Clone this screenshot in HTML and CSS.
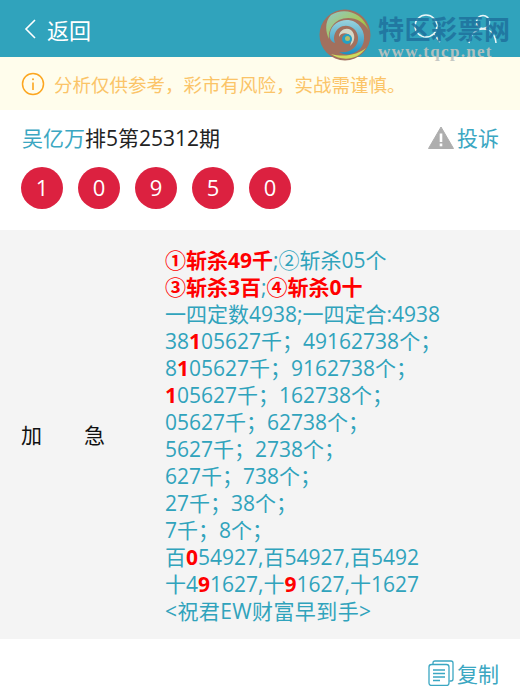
FILE: index.html
```html
<!DOCTYPE html>
<html lang="zh-CN">
<head>
    <meta charset="UTF-8">
    <meta name="viewport" content="width=device-width, initial-scale=1.0">
    <title>吴亿万排5第25312期</title>
    <link rel="stylesheet" href="styles.css">
</head>

<body>
    <header class="topbar">
        <div class="back">
            <svg class="back-icon" width="14" height="22" viewBox="0 0 14 22"><path d="M12 2 L3 11 L12 20" fill="none" stroke="#fff" stroke-width="1.6"/></svg>
            <span>返回</span>
        </div>
        <div class="top-icons">
            <svg width="28" height="30" viewBox="0 0 28 30"><circle cx="12" cy="12" r="11" fill="none" stroke="#fff" stroke-width="1.5"/><path d="M20 20 L26 28" stroke="#fff" stroke-width="1.5"/></svg>
            <svg width="32" height="30" viewBox="0 0 32 30"><circle cx="17" cy="8" r="6.500" fill="none" stroke="#fff" stroke-width="1.5"/><path d="M3 29 C5 20 10 15 17 15 C24 15 29 20 30 29" fill="none" stroke="#fff" stroke-width="1.5"/></svg>
        </div>
        <!-- watermark lying over the bar -->
        <div class="watermark">
            <svg class="wm-logo" width="52" height="52" viewBox="0 0 52 52">
                <defs>
                    <linearGradient id="wmTop" x1="0" y1="0" x2="1" y2="1"><stop offset="0" stop-color="#8fc9cf"/><stop offset="0.6" stop-color="#a9c84e"/><stop offset="1" stop-color="#6f9f55"/></linearGradient>
                    <linearGradient id="wmBlue" x1="0" y1="0" x2="0" y2="1"><stop offset="0" stop-color="#9ad2dd"/><stop offset="1" stop-color="#1a8fc2"/></linearGradient>
                </defs>
                <circle cx="26" cy="26" r="25.500" fill="#a2705e"/>
                <path d="M12 6 C24 -2 44 2 50 22 C44 10 30 6 20 11 C13 15 9 22 10 30 C6 22 6 12 12 6 Z" fill="url(#wmTop)"/>
                <path d="M11 24 C13 13 26 8 36 13 C46 19 48 32 41 40 C35 46 26 47 20 43 C30 45 40 38 39 28 C38 18 27 14 20 19 C15 23 14 29 16 34 C11 32 10 28 11 24 Z" fill="url(#wmBlue)"/>
                <path d="M20 28 C20 21 27 18 32 21 C37 25 36 33 31 37 C33 32 33 27 29 25 C25 23 21 25 20 28 Z" fill="#d4d8c8"/>
                <circle cx="28" cy="30" r="5" fill="#25a0c4"/>
                <circle cx="28.500" cy="29.500" r="2.500" fill="#b5bd6a"/>
                <path d="M12 45 C22 52 38 52 47 39 C40 45 26 49 12 45 Z" fill="#cddc5c"/>
            </svg>
            <div class="wm-text">
                <div class="wm-title">特区彩票网</div>
                <div class="wm-url">www.tqcp.net</div>
            </div>
        </div>
    </header>

    <div class="notice">
        <svg width="24" height="24" viewBox="0 0 24 24"><circle cx="12" cy="12" r="10.500" fill="none" stroke="#fca61f" stroke-width="1.5"/><path d="M12 10.500 V18" stroke="#fca61f" stroke-width="1.6"/><circle cx="12" cy="7.300" r="1" fill="#fca61f"/></svg>
        <span>分析仅供参考，彩市有风险，实战需谨慎。</span>
    </div>

    <section class="info">
        <div class="info-row">
            <div class="title"><span class="author">吴亿万</span>排5第25312期</div>
            <div class="report">
                <svg width="26" height="24" viewBox="0 0 26 24"><path d="M13 1 L25.500 22.500 H0.500 Z" fill="#aeaeae" stroke="#aeaeae" stroke-width="1" stroke-linejoin="round"/><rect x="11.700" y="7.500" width="2.600" height="8.500" fill="#fff"/><rect x="11.700" y="17.500" width="2.600" height="2.800" fill="#fff"/></svg>
                <span>投诉</span>
            </div>
        </div>
        <div class="balls">
            <span class="ball">1</span>
            <span class="ball">0</span>
            <span class="ball">9</span>
            <span class="ball">5</span>
            <span class="ball">0</span>
        </div>
    </section>

    <section class="plan">
        <div class="plan-label">加急</div>
        <div class="plan-text">
            <div><b>①斩杀49千</b>;②斩杀05个</div>
            <div><b>③斩杀3百</b>;<b>④斩杀0十</b></div>
            <div>一四定数4938;一四定合:4938</div>
            <div>38<b>1</b>05627千；49162738个；</div>
            <div>8<b>1</b>05627千；9162738个；</div>
            <div><b>1</b>05627千；162738个；</div>
            <div>05627千；62738个；</div>
            <div>5627千；2738个；</div>
            <div>627千；738个；</div>
            <div>27千；38个；</div>
            <div>7千；8个；</div>
            <div>百<b>0</b>54927,百54927,百5492</div>
            <div>十4<b>9</b>1627,十<b>9</b>1627,十1627</div>
            <div class="plan-sign">&lt;祝君EW财富早到手&gt;</div>
        </div>
    </section>

    <footer class="copy-row">
        <svg width="26" height="26" viewBox="0 0 26 26" fill="none" stroke="#3ba7c2" stroke-width="1.300"><path d="M5 4 V3 Q5 1 7 1 H23 Q25 1 25 3 V19 Q25 21 23 21 H21.500"/><rect x="1" y="4.500" width="20" height="21" rx="2.500"/><path d="M5 10 H17 M5 13.500 H17 M5 17 H17 M5 20.500 H12"/></svg>
        <span>复制</span>
    </footer>
</body>
</html>
```

FILE: styles.css
```css
* {
    box-sizing: border-box;
}

body {
    margin: 0;
    font-family: "Open Sans", "Noto Sans CJK SC", sans-serif;
    font-size: 21px;
    color: #222;
    background-color: #fff;
    overflow: hidden;
}

.topbar {
    position: relative;
    display: flex;
    align-items: center;
    justify-content: space-between;
    height: 57px;
    padding: 0 22px 0 23px;
    background-color: #30a3bc;
    color: #fff;
}

.back {
    display: flex;
    align-items: center;
    gap: 10px;
    font-size: 22px;
}

.top-icons {
    display: flex;
    gap: 24px;
    margin-top: 1px;
    opacity: 0.9;
}

.watermark {
    position: absolute;
    left: 319px;
    top: 9px;
    display: flex;
    gap: 7px;
}

.wm-text {
    margin-top: 6px;
    opacity: 0.9;
}

.wm-title {
    font-size: 26px;
    line-height: 28px;
    font-weight: 700;
    letter-spacing: 0.500px;
    white-space: nowrap;
    color: #20749f;
}

.wm-url {
    font-family: "Liberation Serif", serif;
    font-size: 17px;
    line-height: 18px;
    font-weight: 700;
    letter-spacing: 1.300px;
    white-space: nowrap;
    color: #bfc4c0;
}

.notice {
    display: flex;
    align-items: center;
    gap: 9px;
    height: 53px;
    padding: 0 21px;
    background-color: #fffdec;
    color: #fbc468;
    font-size: 18.500px;
}

.info {
    height: 120px;
    padding: 13px 21px 0 22px;
}

.info-row {
    display: flex;
    align-items: center;
    justify-content: space-between;
    line-height: 30px;
}

.author {
    color: #3ba7c2;
}

.report {
    display: flex;
    align-items: center;
    gap: 3px;
    color: #3ba7c2;
}

.balls {
    display: flex;
    gap: 15px;
    margin: 14px 0 0 -1px;
}

.ball {
    width: 42px;
    height: 42px;
    border-radius: 50%;
    background-color: #dc2140;
    color: #fff;
    text-align: center;
    line-height: 41px;
    font-size: 22px;
}

.plan {
    display: flex;
    align-items: center;
    height: 409px;
    padding-left: 21px;
    background-color: #f4f4f4;
}

.plan-label {
    width: 144px;
    margin-bottom: 2px;
    padding-right: 60px;
    color: #111;
    text-align: justify;
    text-align-last: justify;
}

.plan-text {
    padding-top: 2px;
    line-height: 27px;
    color: #30a3bc;
    white-space: nowrap;
}

.plan-text b {
    color: #ff0000;
}

.plan-sign {
    letter-spacing: 0.400px;
}

.copy-row {
    display: flex;
    align-items: center;
    justify-content: flex-end;
    gap: 3px;
    height: 50px;
    padding: 18px 21px 0 0;
    color: #3ba7c2;
}
```
